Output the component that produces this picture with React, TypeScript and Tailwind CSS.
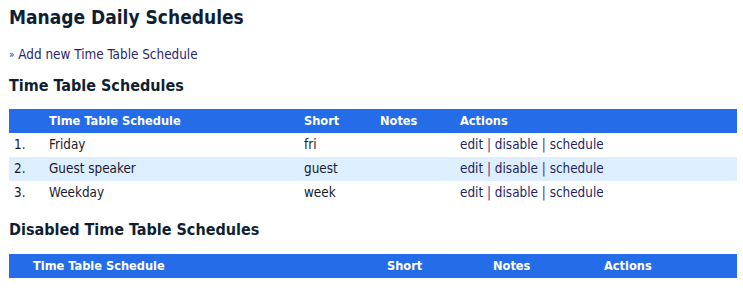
import React from "react";

const rows = [
  { n: "1.", name: "Friday", short: "fri" },
  { n: "2.", name: "Guest speaker", short: "guest" },
  { n: "3.", name: "Weekday", short: "week" },
];

function Actions() {
  return (
    <span className="text-[#1f1f66]">
      <a>edit</a> <span className="text-[#5a2a7a]">|</span> <a>disable</a>{" "}
      <span className="text-[#5a2a7a]">|</span> <a>schedule</a>
    </span>
  );
}

export default function App() {
  return (
    <div
      className="w-[743px] h-[300px] bg-white overflow-hidden text-[13.4px] text-[#1a1a2a]"
      style={{ fontFamily: "Tahoma, 'DejaVu Sans Condensed', 'DejaVu Sans', sans-serif" }}
    >
      <div className="px-[9px] pt-[5px]">
        <h1 className="text-[19px] font-bold text-[#0f1f33] leading-[24px]">Manage Daily Schedules</h1>
        <div className="mt-[18px] leading-[16px] text-[#2a1f6e]">
          <span className="text-[10px] align-[1px]">»</span> Add new Time Table Schedule
        </div>
        <h2 className="mt-[12px] text-[16px] font-bold text-[#0f1f33] leading-[22px]">Time Table Schedules</h2>
        <div className="mt-[12px] w-[728px]">
          <div className="grid grid-cols-[35px_255px_76px_80px_1fr] bg-[#256ce8] text-white font-bold text-[12.7px] h-[24px] items-center">
            <div></div>
            <div className="pl-[5px]">Time Table Schedule</div>
            <div className="pl-[5px]">Short</div>
            <div className="pl-[5px]">Notes</div>
            <div className="pl-[5px]">Actions</div>
          </div>
          {rows.map((r, i) => (
            <div
              key={r.n}
              className={`grid grid-cols-[35px_255px_76px_80px_1fr] h-[24px] items-center ${i === 1 ? "bg-[#ddeeff]" : "bg-white"}`}
            >
              <div className="pl-[5px]">{r.n}</div>
              <div className="pl-[5px]">{r.name}</div>
              <div className="pl-[5px]">{r.short}</div>
              <div className="pl-[5px]"></div>
              <div className="pl-[5px]">
                <Actions />
              </div>
            </div>
          ))}
        </div>
        <h2 className="mt-[14px] text-[16px] font-bold text-[#0f1f33] leading-[22px]">Disabled Time Table Schedules</h2>
        <div className="mt-[13px] w-[728px]">
          <div className="grid grid-cols-[19px_354px_106px_111px_1fr] bg-[#256ce8] text-white font-bold text-[12.7px] h-[24px] items-center">
            <div></div>
            <div className="pl-[5px]">Time Table Schedule</div>
            <div className="pl-[5px]">Short</div>
            <div className="pl-[5px]">Notes</div>
            <div className="pl-[5px]">Actions</div>
          </div>
        </div>
      </div>
    </div>
  );
}
